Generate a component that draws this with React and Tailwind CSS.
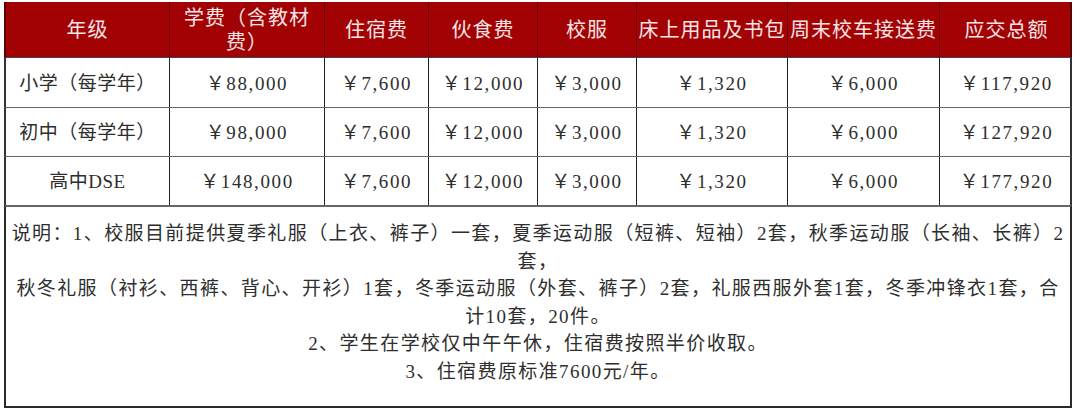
import React from "react";

const font = { fontFamily: '"Liberation Serif", "Noto Sans CJK SC", serif' };

const cols = "grid-cols-[164px_155px_104px_109px_99px_151px_152px_133px]";

const headers = ["年级", "学费（含教材费）", "住宿费", "伙食费", "校服", "床上用品及书包", "周末校车接送费", "应交总额"];

const rows = [
  ["小学（每学年）", "￥88,000", "￥7,600", "￥12,000", "￥3,000", "￥1,320", "￥6,000", "￥117,920"],
  ["初中（每学年）", "￥98,000", "￥7,600", "￥12,000", "￥3,000", "￥1,320", "￥6,000", "￥127,920"],
  ["高中DSE", "￥148,000", "￥7,600", "￥12,000", "￥3,000", "￥1,320", "￥6,000", "￥177,920"],
];

export default function App() {
  return (
    <div className="w-[1080px] h-[412px] bg-white pt-[2px] pl-[4px] overflow-hidden" style={font}>
      <div className="w-[1068px]">
        <div className={`grid ${cols} h-[55px] bg-[#a20204] border-l-2 border-r-2 border-[#5a0000]`}>
          {headers.map((h, i) => (
            <div
              key={i}
              className={`flex items-center justify-center text-center text-[20px] leading-[24px] tracking-[1px] text-[#f6e4e4] whitespace-nowrap ${i < 7 ? "border-r border-[#6e0000]" : ""}`}
            >
              {i === 1 ? (
                <span>
                  学费（含教材
                  <br />
                  费）
                </span>
              ) : (
                h
              )}
            </div>
          ))}
        </div>
        {rows.map((r, ri) => (
          <div
            key={ri}
            className={`grid ${cols} ${ri === 0 ? "h-[50px]" : "h-[49px]"} border-l-2 border-r-2 border-[#333] border-t ${ri === 0 ? "border-t-[#444]" : "border-t-[#666]"}`}
          >
            {r.map((c, i) => (
              <div
                key={i}
                className={`flex items-center justify-center pt-[3px] text-[19px] text-[#2e2e2e] whitespace-nowrap ${i === 0 ? "tracking-[0.5px]" : "tracking-[1.6px]"} ${i < 7 ? "border-r border-[#222]" : ""}`}
              >
                {c}
              </div>
            ))}
          </div>
        ))}
        <div className="h-[203px] border-2 border-[#2a2a2a] border-t-[#666] pt-[13px] text-[#2e2e2e] text-[19px] leading-[27.5px] tracking-[1.4px] text-center whitespace-nowrap">
          <div>说明：1、校服目前提供夏季礼服（上衣、裤子）一套，夏季运动服（短裤、短袖）2套，秋季运动服（长袖、长裤）2</div>
          <div>套，</div>
          <div>秋冬礼服（衬衫、西裤、背心、开衫）1套，冬季运动服（外套、裤子）2套，礼服西服外套1套，冬季冲锋衣1套，合</div>
          <div>计10套，20件。</div>
          <div>2、学生在学校仅中午午休，住宿费按照半价收取。</div>
          <div>3、住宿费原标准7600元/年。</div>
        </div>
      </div>
    </div>
  );
}
